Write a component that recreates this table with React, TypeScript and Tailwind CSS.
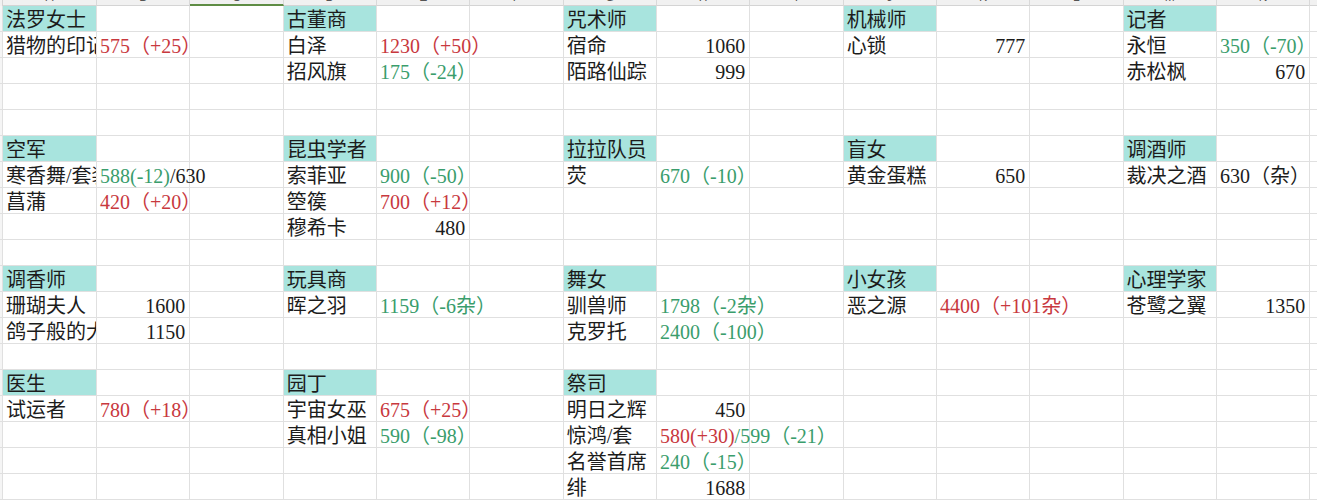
import React from 'react';

type Part = [string, string];
type Cell = { parts: Part[]; right?: boolean; clip?: boolean; head?: boolean };

const R = 'text-[#c8383e]';
const G = 'text-[#3a9d6c]';
const K = 'text-[#1c1c1c]';

const h = (s: string): Cell => ({ parts: [[K, s]], head: true });
const t = (c: string, s: string): Cell => ({ parts: [[c, s]] });
const n = (s: string): Cell => ({ parts: [[K, s]], right: true });
const c = (s: string): Cell => ({ parts: [[K, s]], clip: true });

const DATA: [number, number, Cell][] = [
  // block 1
  [1, 0, h('法罗女士')],
  [2, 0, c('猎物的印记')],
  [2, 1, t(R, '575（+25）')],
  [1, 3, h('古董商')],
  [2, 3, t(K, '白泽')],
  [2, 4, t(R, '1230（+50）')],
  [3, 3, t(K, '招风旗')],
  [3, 4, t(G, '175（-24）')],
  [1, 6, h('咒术师')],
  [2, 6, t(K, '宿命')],
  [2, 7, n('1060')],
  [3, 6, t(K, '陌路仙踪')],
  [3, 7, n('999')],
  [1, 9, h('机械师')],
  [2, 9, t(K, '心锁')],
  [2, 10, n('777')],
  [1, 12, h('记者')],
  [2, 12, t(K, '永恒')],
  [2, 13, t(G, '350（-70）')],
  [3, 12, t(K, '赤松枫')],
  [3, 13, n('670')],
  // block 2
  [6, 0, h('空军')],
  [7, 0, c('寒香舞/套装')],
  [7, 1, { parts: [[G, '588(-12)'], [K, '/630']] }],
  [8, 0, t(K, '菖蒲')],
  [8, 1, t(R, '420（+20）')],
  [6, 3, h('昆虫学者')],
  [7, 3, t(K, '索菲亚')],
  [7, 4, t(G, '900（-50）')],
  [8, 3, t(K, '箜篌')],
  [8, 4, t(R, '700（+12）')],
  [9, 3, t(K, '穆希卡')],
  [9, 4, n('480')],
  [6, 6, h('拉拉队员')],
  [7, 6, t(K, '荧')],
  [7, 7, t(G, '670（-10）')],
  [6, 9, h('盲女')],
  [7, 9, t(K, '黄金蛋糕')],
  [7, 10, n('650')],
  [6, 12, h('调酒师')],
  [7, 12, t(K, '裁决之酒')],
  [7, 13, t(K, '630（杂）')],
  // block 3
  [11, 0, h('调香师')],
  [12, 0, t(K, '珊瑚夫人')],
  [12, 1, n('1600')],
  [13, 0, c('鸽子般的大')],
  [13, 1, n('1150')],
  [11, 3, h('玩具商')],
  [12, 3, t(K, '晖之羽')],
  [12, 4, t(G, '1159（-6杂）')],
  [11, 6, h('舞女')],
  [12, 6, t(K, '驯兽师')],
  [12, 7, t(G, '1798（-2杂）')],
  [13, 6, t(K, '克罗托')],
  [13, 7, t(G, '2400（-100）')],
  [11, 9, h('小女孩')],
  [12, 9, t(K, '恶之源')],
  [12, 10, t(R, '4400（+101杂）')],
  [11, 12, h('心理学家')],
  [12, 12, t(K, '苍鹭之翼')],
  [12, 13, n('1350')],
  // block 4
  [15, 0, h('医生')],
  [16, 0, t(K, '试运者')],
  [16, 1, t(R, '780（+18）')],
  [15, 3, h('园丁')],
  [16, 3, t(K, '宇宙女巫')],
  [16, 4, t(R, '675（+25）')],
  [17, 3, t(K, '真相小姐')],
  [17, 4, t(G, '590（-98）')],
  [15, 6, h('祭司')],
  [16, 6, t(K, '明日之辉')],
  [16, 7, n('450')],
  [17, 6, t(K, '惊鸿/套')],
  [17, 7, { parts: [[R, '580(+30)'], [G, '/599（-21）']] }],
  [18, 6, t(K, '名誉首席')],
  [18, 7, t(G, '240（-15）')],
  [19, 6, t(K, '绯')],
  [19, 7, n('1688')],
];

const MAP = new Map<string, Cell>();
DATA.forEach(([r, col, cell]) => MAP.set(`${r}-${col}`, cell));

const LETTERS = 'ABCDEFGHIJKLMNO'.split('');
const ROWS = Array.from({ length: 19 }, (_, i) => i + 1);

function GridCell({ r, col }: { r: number; col: number }) {
  const cell = MAP.get(`${r}-${col}`);
  const width = col === 0 ? 'w-[94px]' : col === 15 ? 'w-[20px]' : 'w-[93.33px]';
  const bg = cell?.head ? 'bg-[#a8e4de]' : '';
  const align = cell?.right ? 'text-right pr-[4px]' : 'pl-[3px]';
  const clip = cell?.clip ? 'overflow-hidden' : '';
  return (
    <div
      className={`${width} ${bg} ${align} ${clip} h-[26px] shrink-0 whitespace-nowrap border-r border-b border-[#e0e0e0] pt-[3px] text-[20px] leading-[22px]`}
    >
      {cell?.parts.map(([color, s], i) => (
        <span key={i} className={color}>
          {s}
        </span>
      ))}
    </div>
  );
}

export default function App() {
  return (
    <div className="h-[500px] w-[1317px] overflow-hidden bg-white font-['Liberation_Serif','Noto_Sans_CJK_SC',serif]">
      {/* column header strip (mostly scrolled off) */}
      <div className="flex h-[6px] overflow-hidden bg-[#f1f1f1]">
        <div className="w-[3px] shrink-0 border-r border-[#d4d4d4]" />
        {LETTERS.map((l, i) => (
          <div
            key={l}
            className={`${i === 0 ? 'w-[94px]' : i === 15 ? 'w-[20px]' : 'w-[93.33px]'} ${
              i === 2 ? 'border-b-2 border-b-[#5f8d45]' : 'border-b border-b-[#d4d4d4]'
            } relative h-[6px] shrink-0 border-r border-r-[#d9d9d9] text-center font-['Liberation_Sans',sans-serif] text-[12px] leading-[12px] text-[#555]`}
          >
            <div className="-mt-[9px]">{l}</div>
          </div>
        ))}
      </div>
      {ROWS.map((r) => (
        <div key={r} className="flex">
          <div className="h-[26px] w-[3px] shrink-0 border-r border-b border-[#e0e0e0] bg-[#f5f5f5]" />
          {LETTERS.map((_, col) => (
            <GridCell key={col} r={r} col={col} />
          ))}
        </div>
      ))}
    </div>
  );
}
